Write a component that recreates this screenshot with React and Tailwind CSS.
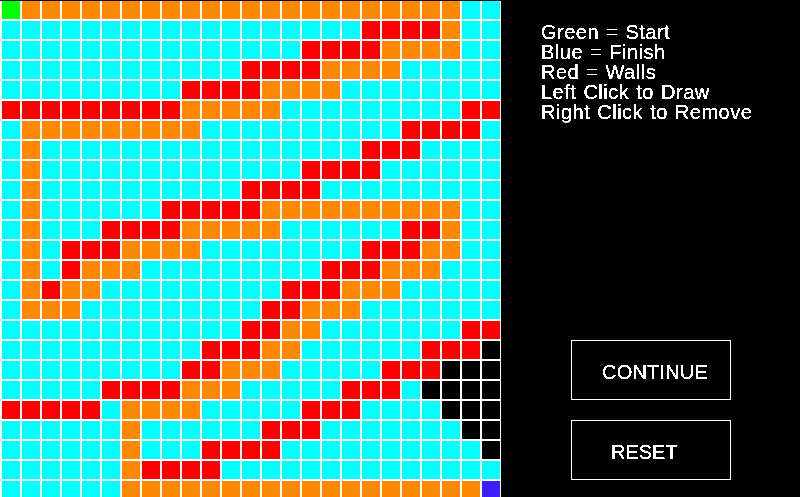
const ROWS = [
  "g" + "o".repeat(22) + "cc",
  "cccccccccccccccccc" + "rrrr" + "o" + "cc",
  "ccccccccccccccc" + "rrrr" + "oooo" + "cc",
  "cccccccccccc" + "rrrr" + "oooo" + "ccccc",
  "ccccccccc" + "rrrr" + "oooo" + "cccccccc",
  "rrrrrrrrr" + "ooooo" + "ccccccccc" + "rr",
  "c" + "ooooooooo" + "cccccccccc" + "rrrr" + "c",
  "co" + "cccccccccccccccc" + "rrr" + "cccc",
  "co" + "ccccccccccccc" + "rrrr" + "cccccc",
  "co" + "cccccccccc" + "rrrr" + "ccccccccc",
  "co" + "cccccc" + "rrrrr" + "oooooooooo" + "cc",
  "co" + "ccc" + "rrrr" + "ooooo" + "cccccc" + "rr" + "o" + "cc",
  "co" + "c" + "rrr" + "oooo" + "cccccccc" + "rrr" + "oo" + "cc",
  "co" + "c" + "r" + "ooo" + "ccccccccc" + "rrr" + "ooo" + "ccc",
  "co" + "r" + "oo" + "ccccccccc" + "rrr" + "ooo" + "ccccc",
  "cooo" + "ccccccccc" + "rr" + "ooo" + "ccccccc",
  "cccccccccccc" + "rr" + "oo" + "ccccccc" + "rr",
  "cccccccccc" + "rrr" + "oo" + "cccccc" + "rrr" + "k",
  "ccccccccc" + "rr" + "ooo" + "ccccc" + "rrr" + "kkk",
  "ccccc" + "rrrr" + "ooo" + "ccccc" + "rrr" + "c" + "kkkk",
  "rrrrr" + "c" + "oooo" + "ccccc" + "rrr" + "cccc" + "kkk",
  "cccccc" + "o" + "cccccc" + "rrr" + "ccccccc" + "kk",
  "cccccc" + "o" + "ccc" + "rrrr" + "cccccccccc" + "k",
  "cccccc" + "o" + "rrrr" + "cccccccccccccc",
  "cccccc" + "o".repeat(18) + "b",
];

const COLORS = {
  c: "bg-[#00ffff]",
  o: "bg-[#ff8800]",
  r: "bg-[#ff0000]",
  k: "bg-[#000000]",
  g: "bg-[#00ff00]",
  b: "bg-[#3a20ff]",
};

const LINES = [
  "Green = Start",
  "Blue = Finish",
  "Red = Walls",
  "Left Click to Draw",
  "Right Click to Remove",
];

export default function App() {
  return (
    <div className="flex h-[497px] w-[800px] overflow-hidden bg-black font-['Liberation_Sans',sans-serif] text-white">
      <div className="h-[497px] w-[501px] shrink-0 overflow-hidden pt-px">
        <div className="grid w-[501px] grid-cols-[repeat(25,18px)] auto-rows-[18px] gap-[2px] bg-white pl-[2px] pr-px pb-[2px]">
          {ROWS.flatMap((row, y) =>
            row.split("").map((c, x) => <div key={`${y}-${x}`} className={COLORS[c]} />)
          )}
        </div>
      </div>
      <div className="flex flex-1 flex-col">
        <div className="bg-black pl-10 pt-[22px] text-[20px] leading-[20px] tracking-[0.5px] [word-spacing:1px] brightness-150 contrast-[20]">
          {LINES.map((l) => (
            <div key={l}>{l}</div>
          ))}
        </div>
        <div className="mt-auto flex flex-col gap-5 pb-[17px] pl-[70px]">
          <div className="flex h-[60px] w-[160px] items-center border border-white bg-black pt-[3px] pl-[30px] text-[20px] tracking-[0.2px] brightness-150 contrast-[20]">CONTINUE</div>
          <div className="flex h-[60px] w-[160px] items-center border border-white bg-black pt-[3px] pl-[39px] text-[20px] brightness-150 contrast-[20]">RESET</div>
        </div>
      </div>
    </div>
  );
}
